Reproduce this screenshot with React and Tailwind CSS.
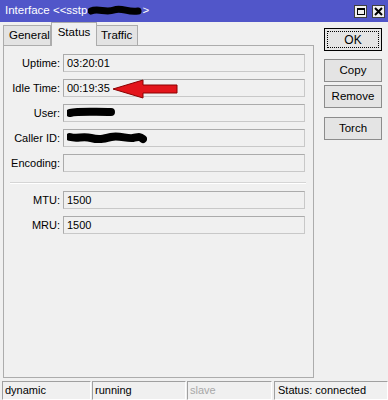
import React from "react";

const font = { fontFamily: '"Liberation Sans", Arial, sans-serif' };

function Field({ label, value, children, className = "" }) {
  return (
    <div className={`flex items-center h-[18px] ${className}`}>
      <div className="w-[56px] text-right leading-none">{label}</div>
      <div className="ml-[3px] w-[242px] h-[18px] border border-[#ababab] border-b-[#c8c8c8] border-r-[#c8c8c8] bg-[#f0f0f0] flex items-center pl-[3px] leading-none">
        {value}
        {children}
      </div>
    </div>
  );
}

function Btn({ children, className = "" }) {
  return (
    <div className={`w-[58px] h-[23px] border border-[#8c8c8c] bg-[#e4e4e4] flex items-center justify-center leading-none text-[11.5px] ${className}`}>
      {children}
    </div>
  );
}

function Cell({ className = "", children }) {
  return (
    <div className={`h-[19px] border border-t-[#a0a0a0] border-l-[#a0a0a0] border-r-white border-b-white flex items-center pl-[2px] leading-none ${className}`}>
      {children}
    </div>
  );
}

export default function App() {
  return (
    <div className="relative w-[388px] h-[400px] bg-[#f0f0f0] overflow-hidden text-[11px] text-black flex flex-col" style={font}>
      {/* Title bar */}
      <div className="h-[22px] bg-[#5156c9] flex items-center pl-[5px] text-white text-[11.5px] leading-none">
        <span>Interface &lt;&lt;sstp</span>
        <svg width="54" height="12" viewBox="0 0 54 12" className="ml-[1px]">
          <path d="M3 6 C10 3, 18 8, 26 5 S 40 8, 50 6" stroke="black" strokeWidth="7" strokeLinecap="round" fill="none" />
        </svg>
        <span>&gt;</span>
        <div className="ml-auto flex items-center gap-[5px] mr-[3px]">
          <div className="w-[13px] h-[13px] bg-[#f0f0f0] border border-[#404040] flex items-center justify-center">
            <div className="w-[8px] h-[7px] border border-black border-t-2"></div>
          </div>
          <div className="w-[13px] h-[13px] bg-[#f0f0f0] border border-[#404040] flex items-center justify-center">
            <svg width="9" height="9" viewBox="0 0 9 9">
              <path d="M1 1 L8 8 M8 1 L1 8" stroke="black" strokeWidth="2" />
            </svg>
          </div>
        </div>
      </div>

      {/* Body */}
      <div className="flex h-[356px]">
        <div className="ml-[3px] w-[311px] flex flex-col">
          {/* Tabs */}
          <div className="h-[23px] flex items-end text-[11.5px]">
            <div className="w-[48px] h-[20px] border border-b-0 border-[#acacac] bg-[#e3e3e3] flex items-center pl-[5px] leading-none">General</div>
            <div className="w-[46px] h-[24px] -mb-[1px] relative z-10 border border-b-0 border-[#acacac] bg-[#f0f0f0] flex items-center justify-center pb-[3px] leading-none">Status</div>
            <div className="w-[41px] h-[20px] border border-b-0 border-l-0 border-[#acacac] bg-[#e3e3e3] flex items-center pl-[4px] leading-none">Traffic</div>
          </div>
          {/* Panel */}
          <div className="h-[333px] border border-[#acacac] bg-[#f0f0f0] pt-[8px]">
            <Field label="Uptime:" value="03:20:01" />
            <Field className="mt-[7px]" label="Idle Time:" value="00:19:35" />
            <Field className="mt-[7px]" label="User:">
              <svg width="48" height="12" viewBox="0 0 48 12">
                <path d="M3 6 C12 4, 24 5, 44 5" stroke="black" strokeWidth="8" strokeLinecap="round" fill="none" />
              </svg>
            </Field>
            <Field className="mt-[7px]" label="Caller ID:">
              <svg width="80" height="12" viewBox="0 0 80 12">
                <path d="M3 5 C10 7, 16 4, 24 6 S 36 7, 44 5 S 60 7, 66 6 S 72 4, 76 7" stroke="black" strokeWidth="8" strokeLinecap="round" fill="none" />
              </svg>
            </Field>
            <Field className="mt-[7px]" label="Encoding:" value="" />
            <div className="mt-[10px] ml-[6px] w-[296px] h-[2px] border-t border-[#d5d5d5] border-b border-b-white"></div>
            <Field className="mt-[7px]" label="MTU:" value="1500" />
            <Field className="mt-[7px]" label="MRU:" value="1500" />
          </div>
        </div>

        {/* Buttons */}
        <div className="ml-[10px] pt-[6px] flex flex-col">
          <div className="w-[58px] h-[23px] border border-black bg-[#e4e4e4] p-[2px]">
            <div className="w-full h-full border border-dotted border-black flex items-center justify-center leading-none text-[12px]">OK</div>
          </div>
          <Btn className="mt-[8px]">Copy</Btn>
          <Btn className="mt-[3px]">Remove</Btn>
          <Btn className="mt-[9px]">Torch</Btn>
        </div>
      </div>

      {/* Status bar */}
      <div className="mt-[3px] flex">
        <Cell className="ml-[2px] w-[89px]">dynamic</Cell>
        <Cell className="ml-[1px] w-[94px]">running</Cell>
        <Cell className="ml-[1px] w-[85px] text-[#a8a8a8]">slave</Cell>
        <Cell className="ml-[2px] w-[114px] pl-[3px]">Status: connected</Cell>
      </div>

      {/* Red arrow annotation */}
      <svg className="absolute left-[112px] top-[78px]" width="68" height="22" viewBox="0 0 68 22">
        <path d="M1 11 L31 2 L31 7 L65 7 L65 15 L31 15 L31 20 Z" fill="#e3151b" stroke="#8a0000" strokeWidth="1" strokeLinejoin="round" />
      </svg>
    </div>
  );
}
